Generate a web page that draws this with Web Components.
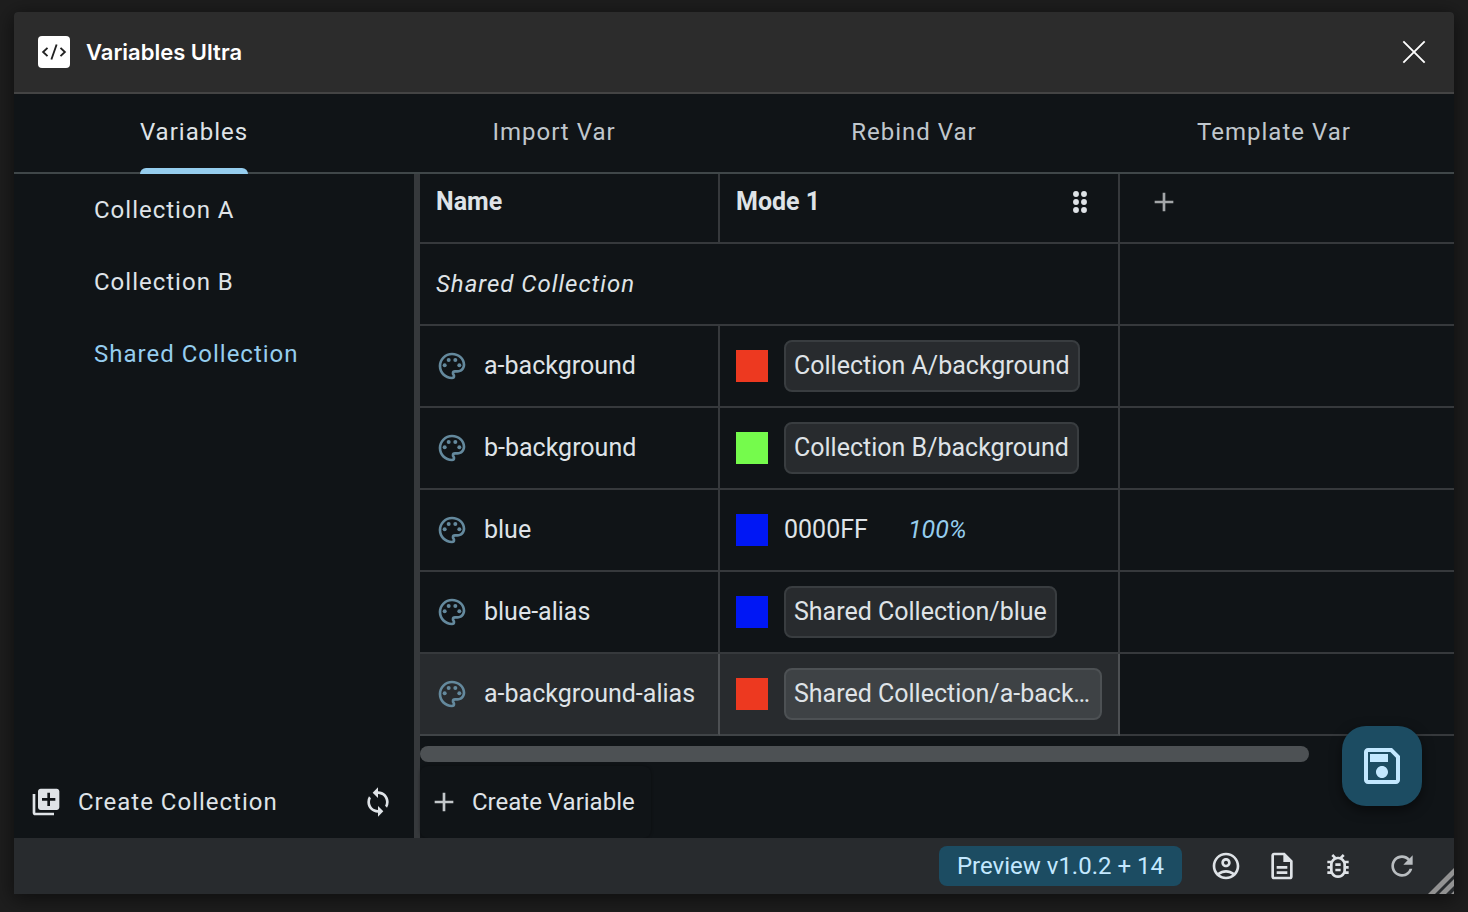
<!DOCTYPE html>
<html lang="en">
<head>
<meta charset="utf-8">
<meta name="viewport" content="width=device-width, initial-scale=1">
<title>Variables Ultra</title>
<style>
  :root {
    --surface: #101417;
    --surface-high: #282b2e;
    --line: #36393c;
    --line-strong: #404749;
    --text: #dfe3e7;
    --text-soft: #c0c7cd;
    --accent: #95cdee;
    --primary: #1c4c62;
    --on-primary: #c3e8ff;
  }
  body {
    box-sizing: border-box;
    min-height: 100vh;
    margin: 0;
    padding: 12px 14px 18px;
    display: flex;
    background: #1e1e1e;
    color: var(--text);
    font: 24px/32px Roboto, "Liberation Sans", sans-serif;
  }
</style>
</head>
<body>
<vu-window heading="Variables Ultra">
  <vu-tabs slot="tabs"></vu-tabs>
  <vu-collections></vu-collections>
  <vu-variables></vu-variables>
  <vu-status slot="status"></vu-status>
</vu-window>

<script>
const ICONS = {
  add: '<path d="M19 13h-6v6h-2v-6H5v-2h6V5h2v6h6z"/>',
  drag: '<circle cx="9" cy="6" r="2.2"/><circle cx="15" cy="6" r="2.2"/><circle cx="9" cy="12" r="2.2"/><circle cx="15" cy="12" r="2.2"/><circle cx="9" cy="18" r="2.2"/><circle cx="15" cy="18" r="2.2"/>',
  palette: '<path d="M12 22C6.49 22 2 17.51 2 12S6.49 2 12 2s10 4.04 10 9c0 3.31-2.69 6-6 6h-1.77c-.28 0-.5.22-.5.5 0 .12.05.23.13.33.41.47.64 1.06.64 1.67A2.5 2.5 0 0 1 12 22zm0-18c-4.41 0-8 3.59-8 8s3.59 8 8 8c.28 0 .5-.22.5-.5a.54.54 0 0 0-.14-.35c-.41-.46-.63-1.05-.63-1.65a2.5 2.5 0 0 1 2.5-2.5H16c2.21 0 4-1.79 4-4 0-3.86-3.59-7-8-7z"/><circle cx="6.5" cy="11.5" r="1.5"/><circle cx="9.5" cy="7.5" r="1.5"/><circle cx="14.5" cy="7.5" r="1.5"/><circle cx="17.5" cy="11.5" r="1.5"/>',
  library: '<path d="M4 6H2v14c0 1.1.9 2 2 2h14v-2H4V6zm16-4H8c-1.1 0-2 .9-2 2v12c0 1.1.9 2 2 2h12c1.1 0 2-.9 2-2V4c0-1.1-.9-2-2-2zm-1 9h-4v4h-2v-4H9V9h4V5h2v4h4v2z"/>',
  sync: '<path d="M12 4V1L8 5l4 4V6c3.31 0 6 2.69 6 6 0 1.01-.25 1.97-.7 2.8l1.46 1.46A7.93 7.93 0 0 0 20 12c0-4.42-3.58-8-8-8zm0 14c-3.31 0-6-2.69-6-6 0-1.01.25-1.97.7-2.8L5.24 7.74A7.93 7.93 0 0 0 4 12c0 4.42 3.58 8 8 8v3l4-4-4-4v3z"/>',
  save: '<path d="M17 3H5c-1.11 0-2 .9-2 2v14c0 1.1.89 2 2 2h14c1.1 0 2-.9 2-2V7l-4-4zm2 16H5V5h11.17L19 7.83V19zm-7-7c-1.66 0-3 1.34-3 3s1.34 3 3 3 3-1.34 3-3-1.34-3-3-3zM6 6h9v4H6V6z"/>',
  account: '<path d="M12 2C6.48 2 2 6.48 2 12s4.48 10 10 10 10-4.48 10-10S17.52 2 12 2zM7.35 18.5C8.66 17.56 10.26 17 12 17s3.34.56 4.65 1.5c-1.31.94-2.91 1.5-4.65 1.5s-3.34-.56-4.65-1.5zm10.79-1.38C16.45 15.8 14.32 15 12 15s-4.45.8-6.14 2.12C4.7 15.73 4 13.95 4 12c0-4.42 3.58-8 8-8s8 3.58 8 8c0 1.95-.7 3.73-1.86 5.12zM12 6c-1.93 0-3.5 1.57-3.5 3.5S10.07 13 12 13s3.5-1.57 3.5-3.5S13.93 6 12 6zm0 5c-.83 0-1.5-.67-1.5-1.5S11.17 8 12 8s1.5.67 1.5 1.5S12.83 11 12 11z"/>',
  document: '<path d="M8 16h8v2H8zm0-4h8v2H8zm6-10H6c-1.1 0-2 .9-2 2v16c0 1.1.89 2 1.99 2H18c1.1 0 2-.9 2-2V8l-6-6zm4 18H6V4h7v5h5v11z"/>',
  bug: '<path d="M20 8h-2.81c-.45-.78-1.07-1.45-1.82-1.96L17 4.41 15.59 3l-2.17 2.17C12.96 5.06 12.49 5 12 5s-.96.06-1.41.17L8.41 3 7 4.41l1.62 1.63C7.88 6.55 7.26 7.22 6.81 8H4v2h2.09c-.05.33-.09.66-.09 1v1H4v2h2v1c0 .34.04.67.09 1H4v2h2.81c1.04 1.79 2.97 3 5.19 3s4.15-1.21 5.19-3H20v-2h-2.09c.05-.33.09-.66.09-1v-1h2v-2h-2v-1c0-.34-.04-.67-.09-1H20V8zm-4 4v3c0 .22-.03.47-.07.7l-.1.65-.37.65c-.72 1.24-2.04 2-3.46 2s-2.74-.77-3.46-2l-.37-.64-.1-.65C8.03 15.48 8 15.23 8 15v-4c0-.23.03-.48.07-.7l.1-.65.37-.65c.3-.52.72-.97 1.21-1.31l.57-.39.74-.18c.31-.08.63-.12.94-.12.32 0 .63.04.95.12l.68.16.61.42c.5.34.91.78 1.21 1.31l.38.65.1.65c.04.22.07.47.07.69v1zm-6 2h4v2h-4zm0-4h4v2h-4z"/>',
  refresh: '<path d="M17.65 6.35C16.2 4.9 14.21 4 12 4c-4.42 0-7.99 3.58-7.99 8s3.57 8 7.99 8c3.73 0 6.84-2.55 7.73-6h-2.08c-.82 2.33-3.04 4-5.65 4-3.31 0-6-2.69-6-6s2.69-6 6-6c1.66 0 3.14.69 4.22 1.78L13 11h7V4l-2.35 2.35z"/>',
  close: '<path d="M4 4l16 16M20 4L4 20" fill="none" stroke="currentColor" stroke-width="1.4"/>',
  code: '<path d="M6.8 8.7L3.3 12l3.5 3.3M17.2 8.7l3.5 3.3-3.5 3.3M14.1 6l-4.2 12" fill="none" stroke="currentColor" stroke-width="1.5"/>'
};

const BASE = `
  *, ::before, ::after { box-sizing: border-box; }
  button { font: inherit; letter-spacing: inherit; color: inherit; background: none; border: 0; padding: 0; margin: 0; cursor: pointer; text-align: left; }
`;

function define(tag, template) {
  customElements.define(tag, class extends HTMLElement {
    constructor() {
      super();
      this.attachShadow({ mode: 'open' });
    }
    connectedCallback() {
      this.shadowRoot.innerHTML = template(this);
    }
  });
}

define('vu-icon', el => `
  <style>
    :host { display: block; flex: none; width: 32px; height: 32px; }
    svg { display: block; width: 100%; height: 100%; fill: currentColor; }
  </style>
  <svg viewBox="0 0 24 24" aria-hidden="true">${ICONS[el.getAttribute('name')]}</svg>`);

define('vu-window', el => `
  <style>${BASE}
    :host { flex: 1; min-width: 0; display: flex; flex-direction: column; border-radius: 4px 4px 0 0; background: var(--surface); box-shadow: 0 4px 20px 2px rgba(0, 0, 0, .5); }
    header { display: flex; align-items: center; gap: 16px; height: 82px; padding: 0 24px; background: #2c2c2c; border-bottom: 2px solid #444; border-radius: 4px 4px 0 0; color: #fff; }
    .logo { display: grid; place-items: center; width: 32px; height: 32px; border-radius: 4px; background: #fff; color: #222; }
    .logo vu-icon { width: 30px; height: 30px; }
    h1 { flex: 1; margin: 0; font: 600 22px/32px Inter, sans-serif; }
    main { flex: 1; display: flex; min-width: 0; }
  </style>
  <header>
    <span class="logo"><vu-icon name="code"></vu-icon></span>
    <h1>${el.getAttribute('heading')}</h1>
    <button aria-label="Close"><vu-icon name="close"></vu-icon></button>
  </header>
  <slot name="tabs"></slot>
  <main><slot></slot></main>
  <slot name="status"></slot>`);

define('vu-tabs', () => `
  <style>${BASE}
    :host { display: block; letter-spacing: 1px; }
    nav { display: grid; grid-template-columns: repeat(4, 1fr); height: 80px; border-bottom: 2px solid var(--line-strong); }
    button { display: flex; justify-content: center; padding-top: 22px; margin-bottom: -2px; color: var(--text-soft); }
    span { display: flex; flex-direction: column; justify-content: space-between; }
    [aria-selected=true] { color: var(--text); }
    [aria-selected=true] span::after { content: ""; height: 6px; border-radius: 6px 6px 0 0; background: var(--accent); }
  </style>
  <nav role="tablist">
    <button role="tab" aria-selected="true"><span>Variables</span></button>
    <button role="tab" aria-selected="false"><span>Import Var</span></button>
    <button role="tab" aria-selected="false"><span>Rebind Var</span></button>
    <button role="tab" aria-selected="false"><span>Template Var</span></button>
  </nav>`);

define('vu-collections', () => `
  <style>${BASE}
    :host { flex: none; display: flex; flex-direction: column; width: 400px; border-right: 6px solid var(--line); letter-spacing: 1px; }
    ul { flex: 1; list-style: none; margin: 0; padding: 0; }
    li button { display: block; width: 100%; height: 72px; padding-left: 80px; }
    [aria-current] { color: var(--accent); }
    footer { display: flex; align-items: center; justify-content: space-between; height: 72px; padding: 0 20px 0 16px; }
    .create { display: flex; align-items: center; gap: 16px; }
  </style>
  <ul>
    <li><button>Collection A</button></li>
    <li><button>Collection B</button></li>
    <li><button aria-current="true">Shared Collection</button></li>
  </ul>
  <footer>
    <button class="create"><vu-icon name="library"></vu-icon>Create Collection</button>
    <button aria-label="Sync"><vu-icon name="sync"></vu-icon></button>
  </footer>`);

const ROWS = [
  { name: 'a-background', color: '#ed3920', alias: 'Collection A/background' },
  { name: 'b-background', color: '#75fb4c', alias: 'Collection B/background' },
  { name: 'blue', color: '#0017f5', value: '0000FF', opacity: '100%' },
  { name: 'blue-alias', color: '#0017f5', alias: 'Shared Collection/blue' },
  { name: 'a-background-alias', color: '#ed3920', alias: 'Shared Collection/a-background', hover: true }
];

define('vu-variables', () => `
  <style>${BASE}
    :host { flex: 1; min-width: 0; display: flex; flex-direction: column; position: relative; }
    table { width: 100%; table-layout: fixed; border-spacing: 0; font-size: 25px; }
    .c1 { width: 300px; } .c2 { width: 400px; }
    th, td { height: 82px; padding: 0 16px; border: 0 solid var(--line); border-width: 0 2px 2px 0; text-align: left; font-weight: 400; }
    th:last-child, td:last-child { border-right: 0; }
    thead th { height: 70px; padding-bottom: 12px; font-weight: 700; }
    thead th:last-child { padding-left: 28px; color: #a3a6a8; }
    thead button { display: block; }
    .group { font-size: 24px; font-style: italic; letter-spacing: 1px; }
    .cell { display: flex; align-items: center; gap: 16px; }
    .spread { justify-content: space-between; padding-right: 6px; }
    tbody th vu-icon { color: #64899d; }
    .swatch { flex: none; width: 32px; height: 32px; }
    .chip { min-width: 0; padding: 8px; border: 2px solid #393d40; border-radius: 8px; background: var(--surface-high); overflow: hidden; text-overflow: ellipsis; white-space: nowrap; }
    .value { width: 108px; }
    .opacity { font-style: italic; color: var(--accent); }
    .hover th, .hover td:nth-child(2) { background: var(--surface-high); border-right-color: #4d5053; border-bottom-color: #404447; }
    .hover .chip { background: #3e4245; border-color: #4d5154; }
    .scroll { margin-top: 10px; height: 16px; width: 86%; border-radius: 8px; background: #4d5154; }
    .create { display: flex; align-items: center; align-self: flex-start; gap: 12px; height: 72px; margin-top: auto; padding: 0 16px 0 8px; border-radius: 8px; box-shadow: 0 0 3px rgba(0, 0, 0, .4); }
    .create vu-icon { color: #c3c7ca; }
    .save { position: absolute; right: 32px; bottom: 32px; display: grid; place-items: center; width: 80px; height: 80px; border-radius: 24px; background: var(--primary); color: var(--on-primary); box-shadow: 0 4px 12px rgba(0, 0, 0, .5); }
    .save vu-icon { width: 48px; height: 48px; }
  </style>
  <table>
    <colgroup><col class="c1"><col class="c2"><col></colgroup>
    <thead>
      <tr>
        <th scope="col">Name</th>
        <th scope="col"><div class="cell spread">Mode 1<vu-icon name="drag"></vu-icon></div></th>
        <th scope="col"><button aria-label="Add mode"><vu-icon name="add"></vu-icon></button></th>
      </tr>
    </thead>
    <tbody>
      <tr><th class="group" colspan="2" scope="colgroup">Shared Collection</th><td></td></tr>
      ${ROWS.map(r => `
      <tr class="${r.hover ? 'hover' : ''}">
        <th scope="row"><div class="cell"><vu-icon name="palette"></vu-icon>${r.name}</div></th>
        <td><div class="cell"><span class="swatch" style="background:${r.color}"></span>${r.alias
          ? `<button class="chip">${r.alias}</button>`
          : `<span class="value">${r.value}</span><span class="opacity">${r.opacity}</span>`}</div></td>
        <td></td>
      </tr>`).join('')}
    </tbody>
  </table>
  <div class="scroll"></div>
  <button class="create"><vu-icon name="add"></vu-icon>Create Variable</button>
  <button class="save" aria-label="Save"><vu-icon name="save"></vu-icon></button>`);

define('vu-status', () => `
  <style>${BASE}
    :host { display: block; position: relative; }
    footer { display: flex; align-items: center; justify-content: flex-end; gap: 24px; height: 56px; padding-right: 36px; background: var(--surface-high); }
    .version { height: 40px; padding: 0 18px; margin-right: 4px; border-radius: 8px; background: var(--primary); color: var(--on-primary); }
    .reload { margin-left: 8px; color: #b9bdc0; }
    .grip { position: absolute; right: 0; bottom: 0; width: 26px; height: 26px; }
  </style>
  <footer>
    <button class="version">Preview v1.0.2 + 14</button>
    <button aria-label="Account"><vu-icon name="account"></vu-icon></button>
    <button aria-label="Documentation"><vu-icon name="document"></vu-icon></button>
    <button aria-label="Report a bug"><vu-icon name="bug"></vu-icon></button>
    <button class="reload" aria-label="Reload"><vu-icon name="refresh"></vu-icon></button>
  </footer>
  <svg class="grip" viewBox="0 0 26 26" aria-hidden="true"><path d="M0 26L26 0v7L7 26zM11 26L26 11v7L18 26zM23 26l3-3v3z" fill="#929292"/></svg>`);
</script>
</body>
</html>
